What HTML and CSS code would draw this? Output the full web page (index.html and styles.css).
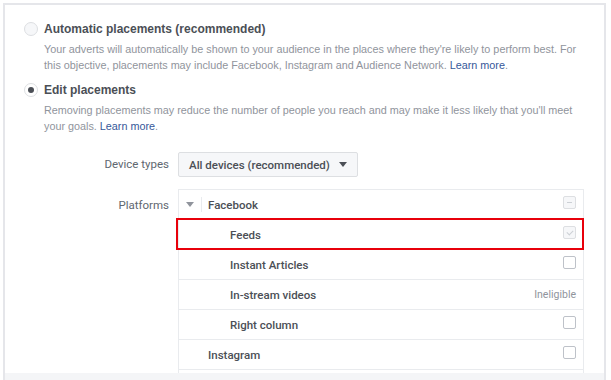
FILE: index.html
```html
<!DOCTYPE html>
<html lang="en">
<head>
	<meta charset="UTF-8">
	<title>Placements</title>
	<link rel="stylesheet" href="styles.css">
</head>
<body>
	<div class="panel">
		<div class="content">
			<div class="option">
				<span class="radio"></span>
				<span class="option-title">Automatic placements (recommended)</span>
			</div>
			<p class="option-desc">Your adverts will automatically be shown to your audience in the places where they're likely to perform best. For this objective, placements may include Facebook, Instagram and Audience Network. <a href="javascript:;">Learn more</a>.</p>

			<div class="option option-second">
				<span class="radio on"></span>
				<span class="option-title">Edit placements</span>
			</div>
			<p class="option-desc">Removing placements may reduce the number of people you reach and may make it less likely that you'll meet your goals. <a href="javascript:;">Learn more</a>.</p>

			<div class="form">
				<div class="form-label label-device">Device types</div>
				<div>
					<a href="javascript:;" class="select">All devices (recommended) <span class="caret"></span></a>
				</div>

				<div class="form-label label-platforms">Platforms</div>
				<div class="platforms">
					<div class="row group">
						<span class="toggle"></span>
						<span class="sep"></span>
						<span class="name">Facebook</span>
						<span class="check disabled minus"></span>
					</div>
					<div class="row sub highlight">
						<span class="name">Feeds</span>
						<span class="check disabled tick"></span>
					</div>
					<div class="row sub">
						<span class="name">Instant Articles</span>
						<span class="check"></span>
					</div>
					<div class="row sub">
						<span class="name">In-stream videos</span>
						<span class="note">Ineligible</span>
					</div>
					<div class="row sub">
						<span class="name">Right column</span>
						<span class="check"></span>
					</div>
					<div class="row group plain">
						<span class="name">Instagram</span>
						<span class="check"></span>
					</div>
					<div class="row group plain">
						<span class="name">Audience Network</span>
						<span class="check"></span>
					</div>
				</div>
			</div>
		</div>
		<div class="footer"></div>
	</div>
</body>
</html>
```

FILE: styles.css
```css
* {
	margin: 0;
	padding: 0;
	box-sizing: border-box;
}
body {
	background: #fff;
	font-family: "Liberation Sans", Arial, sans-serif;
	font-size: 12px;
	color: #4b4f56;
}
.panel {
	margin: 3px 5px 0 3px;
	height: 377px;
	border: 2px solid #e5e6ea;
	border-bottom: none;
	display: flex;
	flex-direction: column;
}
.content {
	flex: 1;
	overflow: hidden;
	padding: 16px 20px 0 19px;
	background: #fff;
}
.footer {
	height: 7px;
	background: #f4f5f7;
}
.option {
	display: flex;
	align-items: center;
	gap: 6px;
	height: 16px;
	line-height: 16px;
}
.option-second {
	margin-top: 9px;
}
.radio {
	width: 14px;
	height: 14px;
	border: 1px solid #dddfe2;
	border-radius: 50%;
	background: #f6f7f9;
	display: flex;
	align-items: center;
	justify-content: center;
}
.radio.on {
	background: #fff;
}
.radio.on::after {
	content: "";
	width: 6px;
	height: 6px;
	border-radius: 50%;
	background: #4b4f56;
}
.option-title {
	font-weight: bold;
	font-size: 12px;
	color: #4b4f56;
}
.option-desc {
	margin: 4px 0 0 20px;
	line-height: 16px;
	color: #90949c;
	font-size: 10.8px;
}
.option-desc a {
	color: #365899;
	text-decoration: none;
}
.form {
	margin-top: 18px;
	display: grid;
	grid-template-columns: 145px 1fr;
	column-gap: 9px;
	row-gap: 12px;
	font-family: Roboto, "Liberation Sans", Arial, sans-serif;
	font-size: 11.5px;
}
.form-label {
	text-align: right;
	color: #606770;
}
.label-device {
	line-height: 25px;
}
.label-platforms {
	padding-top: 8px;
	line-height: 16px;
}
.select {
	display: inline-flex;
	align-items: center;
	gap: 9px;
	height: 25px;
	padding: 0 10px 0 10px;
	border: 1px solid #dddfe2;
	border-radius: 2px;
	background: #f6f7f9;
	color: #4b4f56;
	font-weight: 500;
	text-decoration: none;
}
.caret {
	width: 0;
	height: 0;
	border-left: 4px solid transparent;
	border-right: 4px solid transparent;
	border-top: 5px solid #4b4f56;
}
.platforms {
	border: 1px solid #e9ebee;
	border-bottom: none;
}
.row {
	position: relative;
	display: flex;
	align-items: center;
	height: 30px;
	padding: 0 7px 0 51px;
	border-bottom: 1px solid #e9ebee;
	color: #4b4f56;
	font-weight: 500;
}
.row.group {
	padding-left: 7px;
}
.row.plain {
	padding-left: 29px;
}
.row .name {
	flex: 1;
}
.toggle {
	width: 0;
	height: 0;
	margin-right: 7px;
	border-left: 4px solid transparent;
	border-right: 4px solid transparent;
	border-top: 5px solid #90949c;
}
.sep {
	width: 1px;
	height: 15px;
	margin-right: 6px;
	background: #e9ebee;
}
.check {
	position: relative;
	top: -2px;
	width: 13px;
	height: 13px;
	border: 1px solid #bec2c9;
	border-radius: 2px;
	background: #fff;
}
.check.disabled {
	border-color: #dddfe2;
	background: #f6f7f9;
}
.check.minus::after {
	content: "";
	position: absolute;
	left: 3px;
	top: 5px;
	width: 5px;
	height: 1px;
	background: #ccd0d5;
}
.check.tick::after {
	content: "";
	position: absolute;
	left: 4px;
	top: 2px;
	width: 3px;
	height: 5px;
	border-right: 1px solid #ccd0d5;
	border-bottom: 1px solid #ccd0d5;
	transform: rotate(45deg);
}
.note {
	color: #90949c;
	font-weight: normal;
	font-size: 10.5px;
}
.highlight::after {
	content: "";
	position: absolute;
	top: -2px;
	right: -1px;
	bottom: -1px;
	left: -3px;
	border: 2px solid #e8000b;
	pointer-events: none;
}
```
